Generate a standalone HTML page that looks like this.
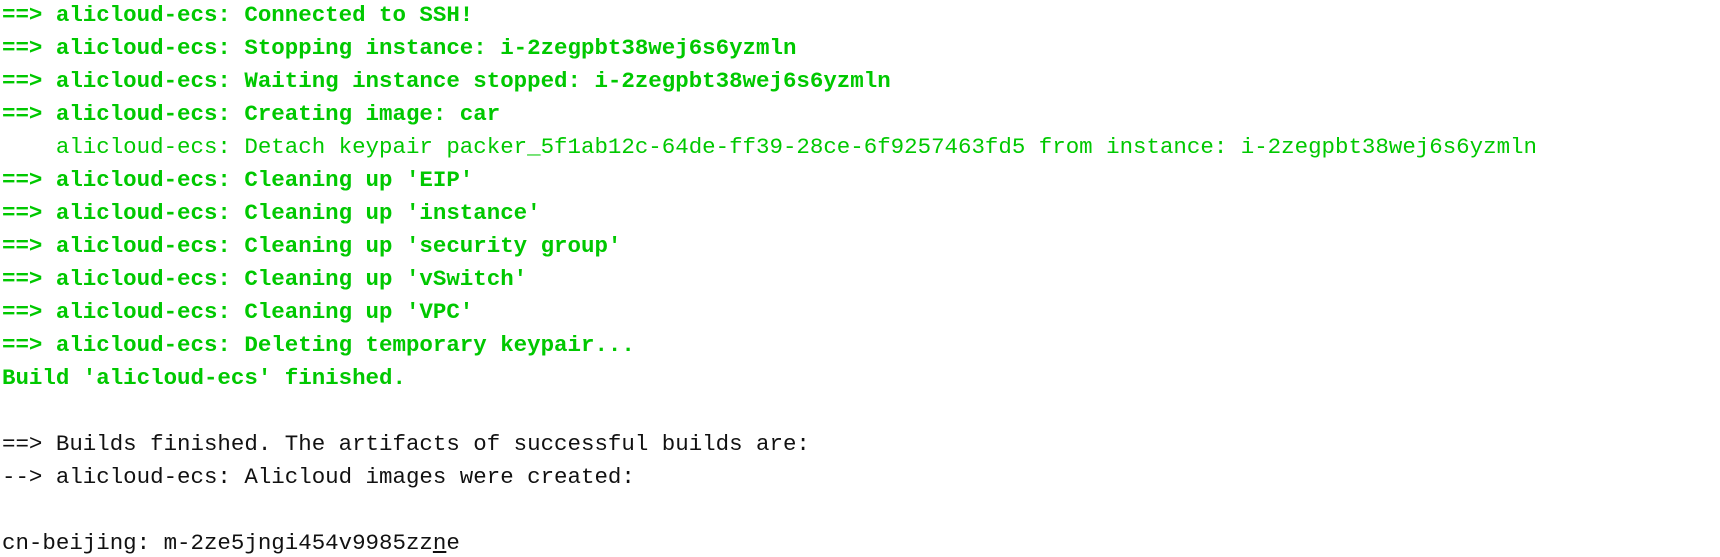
<!DOCTYPE html>
<html><head><meta charset="utf-8"><style>
html,body{margin:0;padding:0;background:#fff;width:1720px;height:557px;overflow:hidden}
pre{margin:0;padding:0 0 0 2px;position:relative;top:-1px;font-family:"Liberation Mono",monospace;font-size:22.45px;line-height:33px;color:#111}
.g{color:#00c800;font-weight:bold}
.r{color:#00c800}
.u{text-decoration:underline}
</style></head><body><pre><span class="g">==&gt; alicloud-ecs: Connected to SSH!
==&gt; alicloud-ecs: Stopping instance: i-2zegpbt38wej6s6yzmln
==&gt; alicloud-ecs: Waiting instance stopped: i-2zegpbt38wej6s6yzmln
==&gt; alicloud-ecs: Creating image: car</span>
<span class="r">    alicloud-ecs: Detach keypair packer_5f1ab12c-64de-ff39-28ce-6f9257463fd5 from instance: i-2zegpbt38wej6s6yzmln</span>
<span class="g">==&gt; alicloud-ecs: Cleaning up 'EIP'
==&gt; alicloud-ecs: Cleaning up 'instance'
==&gt; alicloud-ecs: Cleaning up 'security group'
==&gt; alicloud-ecs: Cleaning up 'vSwitch'
==&gt; alicloud-ecs: Cleaning up 'VPC'
==&gt; alicloud-ecs: Deleting temporary keypair...
Build 'alicloud-ecs' finished.</span>

==&gt; Builds finished. The artifacts of successful builds are:
--&gt; alicloud-ecs: Alicloud images were created:

cn-beijing: m-2ze5jngi454v9985zz<span class="u">n</span>e</pre></body></html>
